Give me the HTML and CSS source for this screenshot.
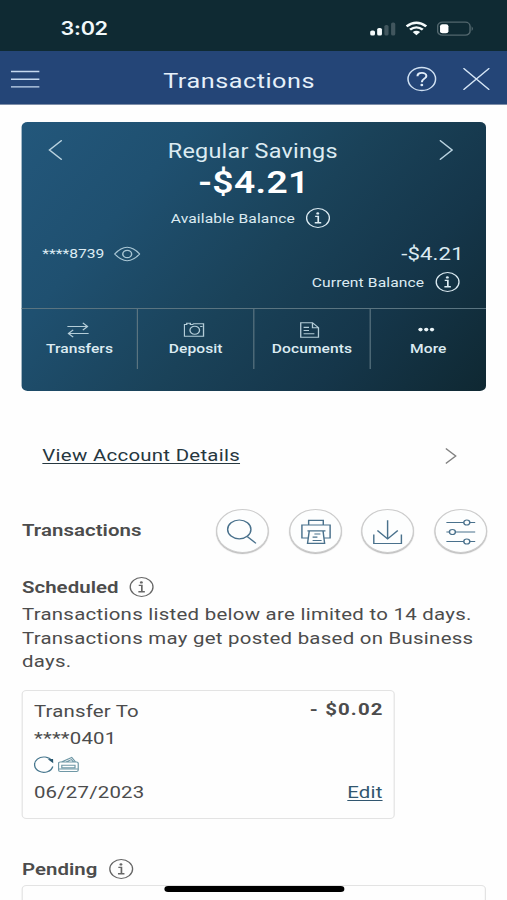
FILE: index.html
```html
<!DOCTYPE html>
<html lang="en">
<head>
<meta charset="utf-8">
<title>Transactions</title>
<link rel="stylesheet" href="styles.css">
</head>
<body>
<svg class="defs" width="0" height="0" aria-hidden="true">
  <symbol id="info" viewBox="0 0 22 22">
    <circle cx="11" cy="11" r="9.5" fill="none" stroke="currentColor" stroke-width="1.1"/>
    <circle cx="10.8" cy="6.4" r="1.2" fill="currentColor"/>
    <path d="M8.6 9.4h2.6v6.2M8.3 15.7h5.4" fill="none" stroke="currentColor" stroke-width="1.4"/>
  </symbol>
</svg>
<div class="screen">
  <div class="status">
    <span class="time">3:02</span>
    <span class="indicators">
      <svg width="22" height="16" viewBox="0 0 22 16"><g fill="#f4fafb"><rect x=".5" y="9.500" width="4" height="5" rx="1.500"/><rect x="6.300" y="7" width="4" height="7.500" rx="1.500"/></g><g fill="#41565e"><rect x="12.300" y="4" width="3.500" height="10.500" rx="1.500"/><rect x="17.900" y="1.500" width="3.500" height="13" rx="1.500"/></g></svg>
      <svg width="18" height="16" viewBox="0 0 18 16"><g fill="none" stroke="#f4fafb" stroke-width="2.300"><path d="M.8 5.400Q9-1.800 17.200 5.400"/><path d="M3.700 8.700Q9 4 14.300 8.700"/></g><path d="M5.900 11Q9 8.400 12.100 11L9 14.300Z" fill="#f4fafb"/></svg>
      <svg width="31" height="16" viewBox="0 0 31 16"><rect x=".7" y="1.200" width="27" height="13" rx="4" fill="none" stroke="#53676e" stroke-width="1.200"/><rect x="2.700" y="3.200" width="7" height="9" rx="2" fill="#fff"/><path d="M29 5.300q2.200 2.400 0 4.800z" fill="#53676e"/></svg>
    </span>
  </div>
  <header class="bar">
    <svg class="burger" width="24" height="20" viewBox="0 0 24 20"><path d="M0 2.500h24M0 10.300h24M0 17.900h24" stroke="#c5d9ef" stroke-width="1.400"/></svg>
    <h1>Transactions</h1>
    <div class="bar-actions">
      <svg width="25" height="26" viewBox="0 0 25 26"><circle cx="12.500" cy="13" r="11.500" fill="none" stroke="#cfe0f2" stroke-width="1.300"/><path d="M8.900 10.200C8.900 5.800 16.300 5.800 16.300 10C16.300 12.700 12.500 12.600 12.500 16.200" fill="none" stroke="#e0ecf8" stroke-width="1.700"/><circle cx="12.500" cy="19" r="1.200" fill="#e0ecf8"/></svg>
      <svg width="22" height="22" viewBox="0 0 22 22"><path d="M0 0L22 22M22 0L0 22" stroke="#d5e5f5" stroke-width="1.300"/></svg>
    </div>
  </header>

  <main>
    <section class="account">
      <div class="title-row">
        <svg width="12" height="20" viewBox="0 0 12 20"><path d="M11.500 .3L1.200 10L11.500 19.700" fill="none" stroke="#b9d2df" stroke-width="1.300"/></svg>
        <h2>Regular Savings</h2>
        <svg width="12" height="20" viewBox="0 0 12 20"><path d="M.5 .3L10.800 10L.5 19.700" fill="none" stroke="#b9d2df" stroke-width="1.300"/></svg>
      </div>
      <div class="amount">-$4.21</div>
      <div class="available"><span>Available Balance</span><svg class="info"><use href="#info"/></svg></div>
      <div class="number-row">
        <span class="masked">****8739</span>
        <svg width="22" height="16" viewBox="0 0 22 16"><g fill="none" stroke="#a9c6d4" stroke-width="1.200"><path d="M.6 8Q11-5.500 21.400 8Q11 21.500 .6 8Z"/><circle cx="11" cy="8" r="3.700"/></g></svg>
        <span class="current-amount">-$4.21</span>
      </div>
      <div class="current"><span>Current Balance</span><svg class="info"><use href="#info"/></svg></div>
      <nav class="actions">
        <a><svg width="18" height="16" viewBox="0 0 18 16"><path d="M0 4.500h16.800M13 .8l4 3.700-4 3.700M18 11.500H1.200M5 7.800l-4 3.700 4 3.700"/></svg>Transfers</a>
        <a><svg width="18" height="16" viewBox="0 0 18 16"><path d="M.6 2.500h2v-1.300h3v1.300h2l.8-.8h8.200v12.600H.6Z"/><circle cx="9.300" cy="8.300" r="4"/><path d="M13.800 4.500h2"/></svg>Deposit</a>
        <a><svg width="18" height="16" viewBox="0 0 18 16"><path d="M1.600.7h9.800l5 5v9.600H1.600ZM11.400.7v5h5M4 5.400h4.500M4 8.500h4.500M4 11.700h9"/></svg>Documents</a>
        <a><svg width="18" height="16" viewBox="0 0 18 16"><g class="dots"><circle cx="4.400" cy="7.600" r="1.800"/><circle cx="9.200" cy="7.600" r="1.800"/><circle cx="14" cy="7.600" r="1.800"/></g></svg>More</a>
      </nav>
    </section>

    <div class="details">
      <a>View Account Details</a>
      <svg width="10" height="16" viewBox="0 0 10 16"><path d="M.5 .5L8.800 8L.5 15.500" fill="none" stroke="#828282" stroke-width="1.200"/></svg>
    </div>

    <div class="toolbar">
      <h3>Transactions</h3>
      <div class="tools">
        <button><svg viewBox="0 0 30 28"><ellipse cx="12.400" cy="11.400" rx="9.700" ry="9.400"/><path d="M19 18.500l7.300 6.900"/></svg></button>
        <button><svg viewBox="0 0 30 28"><path d="M9.200 7V2.300h12.200V7M9 20H3.600V7h23.500v13h-5.200M8.200 12.800h15M9.700 13L8.300 25.300h14.200L21.200 13M14 16h5M12.500 19.200h4M12.500 22.500h7.500"/></svg></button>
        <button><svg viewBox="0 0 30 28"><path d="M15 2.300v18.800M6.500 12.500l8.500 8.500 8.500-8.500M3.500 16.500v9h23v-9"/></svg></button>
        <button><svg viewBox="0 0 30 28"><path d="M3 4.500h14.500M22.500 4.500H27M3 14h2.500M10.500 14H27M3 23.500h14.500M22.500 23.500H27"/><circle cx="20" cy="4.500" r="2.500"/><circle cx="8" cy="14" r="2.500"/><circle cx="20" cy="23.500" r="2.500"/></svg></button>
      </div>
    </div>

    <div class="group-head"><h3>Scheduled</h3><svg class="info"><use href="#info"/></svg></div>
    <p class="note">Transactions listed below are limited to 14 days. Transactions may get posted based on Business days.</p>

    <article class="transfer">
      <div class="line"><span>Transfer To</span><strong>- $0.02</strong></div>
      <div class="line">****0401</div>
      <div class="line icons">
        <svg width="17" height="18" viewBox="0 0 17 18"><path d="M15.300 5A7.700 7.700 0 1 0 16 10.500" fill="none" stroke="#49788f" stroke-width="1.100"/><path d="M11.800 3.200l4.400-.2.200 4.200z" fill="#28566e"/></svg>
        <svg width="18" height="18" viewBox="0 0 18 18"><path d="M2.200 6H3.200L11.800 1.500l3.200 4.500h.8q1.400 0 1.400 1.400v6.600q0 1.400-1.400 1.400H2.200q-1.400 0-1.400-1.400V7.400Q.8 6 2.200 6ZM3.200 6H15M7 6l4.500-2.400 2 2.400M3.500 9.300h11v2.500h-11zM.8 13h16.400" fill="none" stroke="#6f98a6" stroke-width="1"/></svg>
      </div>
      <div class="line date"><span>06/27/2023</span><a>Edit</a></div>
    </article>

    <div class="group-head pending"><h3>Pending</h3><svg class="info"><use href="#info"/></svg></div>
    <article class="pending-card"></article>
  </main>
  <div class="home"></div>
</div>
</body>
</html>
```

FILE: styles.css
```css
* { box-sizing: border-box; }
html, body { margin: 0; height: 900px; overflow: hidden; background: #fefefe; }
h1, h2, h3, p { margin: 0; font-weight: 400; }
svg { display: block; flex: none; }
.defs { position: absolute; }

/* The layout is authored at 422.5px and stretched 1.2 times in width. */
.screen {
  position: relative;
  width: 422.5px;
  height: 900px;
  overflow: hidden;
  transform: scaleX(1.2);
  transform-origin: 0 0;
  font-family: Roboto, sans-serif;
  font-size: 17px;
  letter-spacing: .23px;
  color: #4c4c4c;
}

.status {
  display: flex;
  justify-content: space-between;
  align-items: center;
  height: 51px;
  padding: 6px 28px 0 50.5px;
  background: #0f2a33;
}
.time { font: 600 18px Inter, sans-serif; letter-spacing: -.25px; color: #f1f8fa; }
.indicators { display: flex; gap: 8px; }

.bar {
  display: flex;
  align-items: center;
  height: 54px;
  padding: 2px 15px 0 9px;
  background: #244577;
  border-bottom: 1px solid #7e8ea8;
}
.bar h1 { margin-left: 103px; font-size: 21px; letter-spacing: .45px; color: #e6f0fa; padding-top: 4px; }
.bar-actions { display: flex; align-items: center; margin-left: auto; gap: 22px; }

main { padding: 17px 17.500px 0 18.300px; }

.account {
  height: 269px;
  border-radius: 5px;
  background: linear-gradient(125deg, #23577b 0%, #1f5070 25%, #1a4259 52%, #15364a 75%, #0f2832 100%);
  color: #dcebf2;
}
.title-row {
  display: flex;
  align-items: center;
  justify-content: space-between;
  height: 42px;
  padding: 13px 27px 0 22px;
}
.title-row h2 { font-size: 19.500px; letter-spacing: .18px; padding: 3px 0 0 3px; }
.amount {
  height: 36px;
  line-height: 38px;
  text-align: center;
  font-size: 31px;
  font-weight: 600;
  letter-spacing: .3px;
  color: #fff;
}
.info { width: 22px; height: 22px; }
.available, .current {
  display: flex;
  align-items: center;
  gap: 8px;
  font-size: 13px;
  letter-spacing: .1px;
}
.available { height: 36px; padding-left: 124px; }
.number-row {
  display: flex;
  align-items: center;
  height: 35px;
  gap: 8.500px;
  padding: 0 18.500px 0 17px;
}
.masked { font-size: 13px; letter-spacing: 0; }
.current-amount { margin-left: auto; font-size: 18.500px; letter-spacing: .1px; }
.current { height: 22px; justify-content: flex-end; padding-right: 21.500px; }
.actions {
  display: grid;
  grid-template-columns: 95.800px 97px 96.700px 1fr;
  margin-top: 15px;
  border-top: 1px solid #5a7480;
}
.actions a {
  display: flex;
  flex-direction: column;
  align-items: center;
  height: 60px;
  padding-top: 13px;
  font-size: 13px;
  line-height: 22px;
  font-weight: 500;
  letter-spacing: .05px;
}
.actions a + a { border-left: 1px solid #5a7480; }
.actions svg { position: relative; left: -1.500px; fill: none; stroke: #b4cdd8; stroke-width: 1.100; }
.actions .dots { fill: #e9f3f7; stroke: none; }

.details {
  display: flex;
  align-items: center;
  justify-content: space-between;
  margin-top: 46px;
  height: 36px;
  padding: 0 24px 0 17px;
  color: #26373f;
}
.details a { text-decoration: underline; text-underline-offset: 2px; text-decoration-thickness: 1px; }
.details svg { margin-top: 2px; }

.toolbar {
  display: flex;
  align-items: center;
  justify-content: space-between;
  height: 46px;
  margin-top: 35px;
}
h3 { font-size: 17px; font-weight: 600; letter-spacing: .05px; }
.toolbar h3 { padding-bottom: 2px; }
.tools { display: flex; gap: 16.500px; margin-right: -.5px; }
.tools button {
  display: grid;
  place-items: center;
  width: 44px;
  height: 44px;
  padding: 2px 0 0;
  border: 1px solid #ccc;
  border-radius: 50%;
  background: #fdfefe;
  box-shadow: 0 1px 1px #bbb;
}
.tools svg { width: 30px; height: 28px; fill: none; stroke: #49718c; stroke-width: 1.200; }

.group-head { display: flex; align-items: center; gap: 8.500px; height: 26px; margin-top: 20px; }
.group-head .info { color: #666; }
.note { margin-top: 3px; line-height: 23.500px; }

.transfer {
  width: 310.500px;
  height: 129px;
  margin-top: 16.500px;
  padding: 6.500px 9px 0 9px;
  border: 1px solid #e3e3e3;
  border-radius: 4px;
}
.line { display: flex; justify-content: space-between; align-items: center; height: 27px; letter-spacing: .15px; }
.line strong { font-weight: 700; letter-spacing: .95px; margin-right: -.9px; padding-bottom: 4px; }
.line.icons { justify-content: flex-start; gap: 3px; }
.line a { color: #31566f; text-decoration: underline; text-underline-offset: 2px; text-decoration-thickness: 1px; }

.pending { margin-top: 37px; }
.pending-card { height: 60px; margin-top: 3px; border: 1px solid #e3e3e3; border-radius: 4px; }

.home {
  position: absolute;
  left: 136.500px;
  top: 885.500px;
  width: 150px;
  height: 6px;
  border-radius: 3px;
  background: #000;
}
```
